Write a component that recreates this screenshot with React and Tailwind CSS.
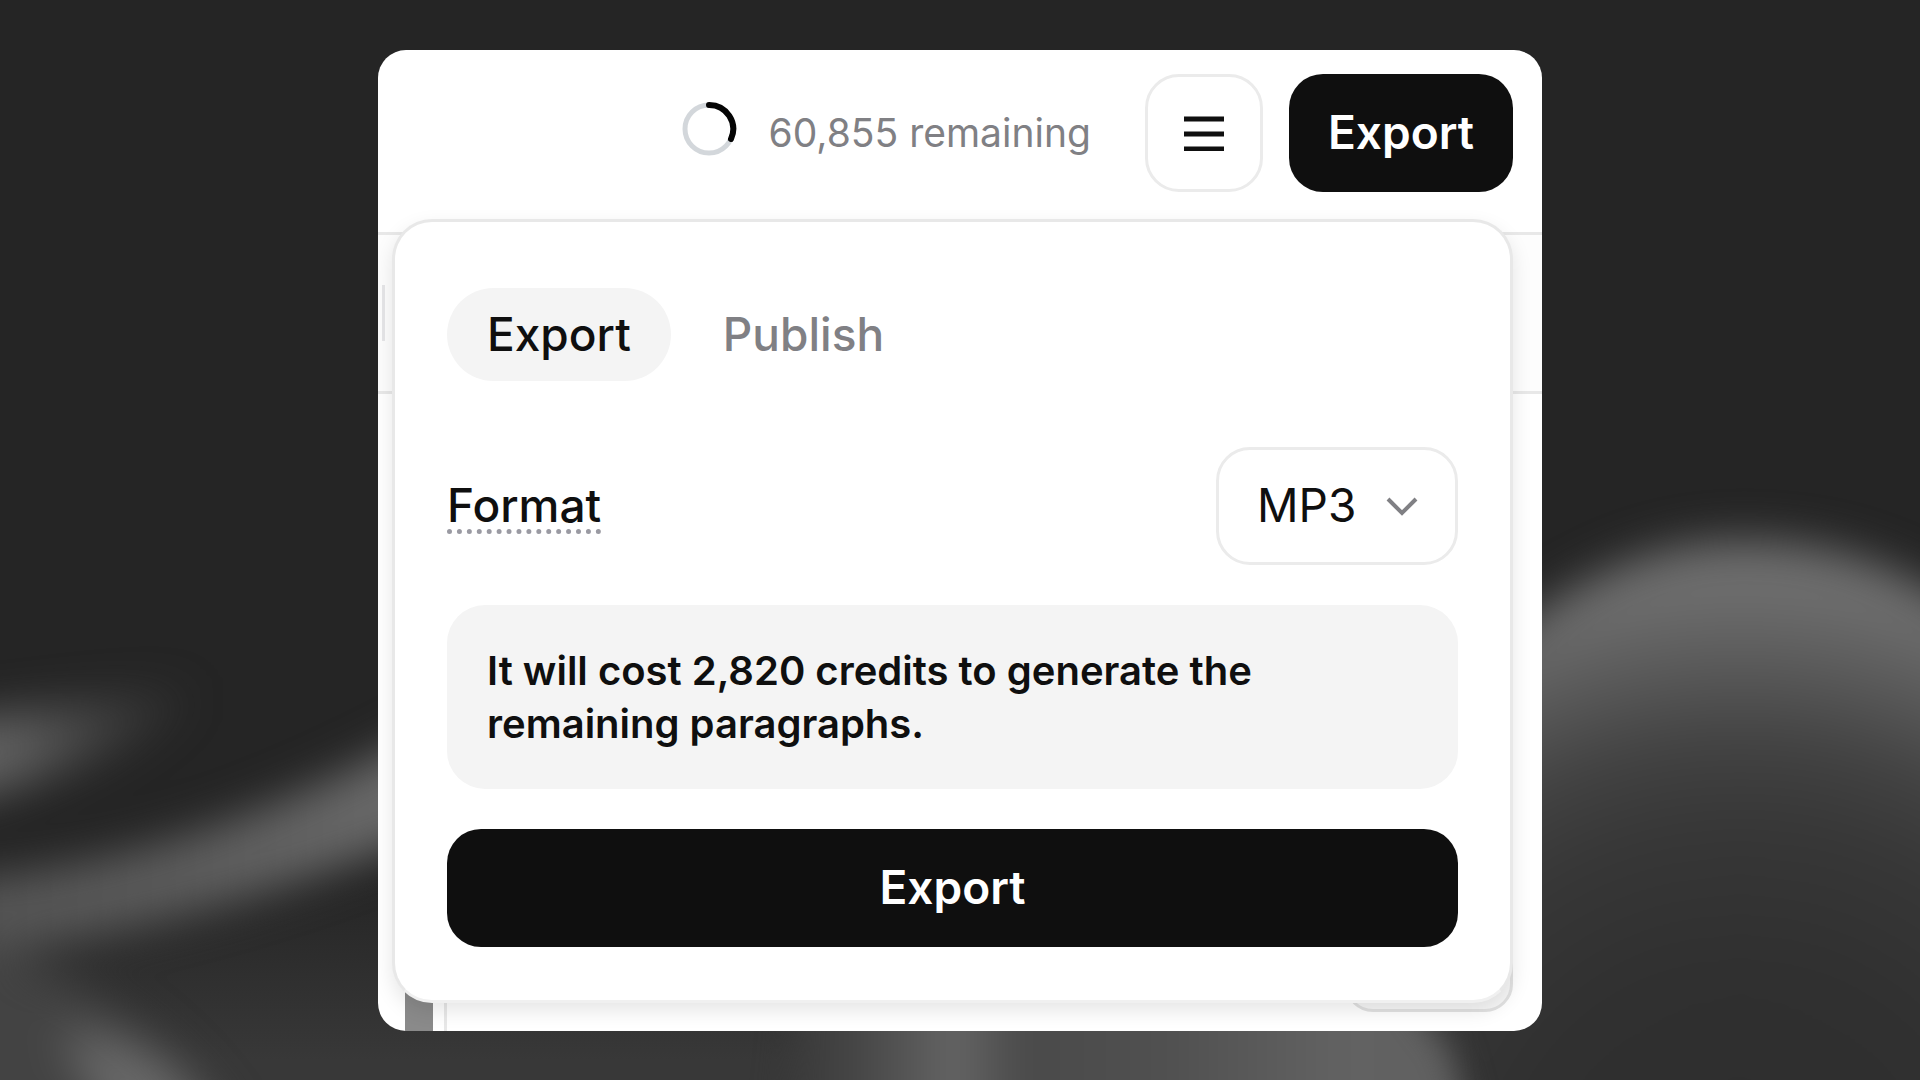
import React from "react";

function Backdrop() {
  return (
    <svg
      aria-hidden="true"
      className="absolute inset-0 h-full w-full"
      viewBox="0 0 1920 1080"
      preserveAspectRatio="none"
    >
      <defs>
        <radialGradient id="dome" gradientUnits="userSpaceOnUse" cx="1740" cy="1200" r="680">
          <stop offset="0" stopColor="#2d2d2d" />
          <stop offset="0.35" stopColor="#303030" />
          <stop offset="0.55" stopColor="#373737" />
          <stop offset="0.67" stopColor="#424242" />
          <stop offset="0.76" stopColor="#545454" />
          <stop offset="0.83" stopColor="#626262" />
          <stop offset="0.9" stopColor="#6e6e6e" />
          <stop offset="1" stopColor="#6c6c6c" />
        </radialGradient>
        <linearGradient id="ribbon" x1="0" y1="0" x2="1" y2="0">
          <stop offset="0" stopColor="#525252" />
          <stop offset="0.5" stopColor="#5c5c5c" />
          <stop offset="1" stopColor="#6c6c6c" />
        </linearGradient>
        <linearGradient id="wisp" gradientUnits="userSpaceOnUse" x1="0" y1="0" x2="200" y2="0">
          <stop offset="0" stopColor="#606060" />
          <stop offset="0.5" stopColor="#606060" stopOpacity="0.45" />
          <stop offset="1" stopColor="#606060" stopOpacity="0" />
        </linearGradient>
        <linearGradient id="floor" gradientUnits="userSpaceOnUse" x1="0" y1="880" x2="0" y2="1060">
          <stop offset="0" stopColor="#383838" stopOpacity="0" />
          <stop offset="1" stopColor="#383838" />
        </linearGradient>
        <linearGradient id="folds" gradientUnits="userSpaceOnUse" x1="780" y1="0" x2="1480" y2="0">
          <stop offset="0" stopColor="#383838" />
          <stop offset="0.1" stopColor="#444444" />
          <stop offset="0.25" stopColor="#646464" />
          <stop offset="0.35" stopColor="#4a4a4a" />
          <stop offset="0.55" stopColor="#505050" />
          <stop offset="0.8" stopColor="#626262" />
          <stop offset="1" stopColor="#606060" />
        </linearGradient>
        <filter id="soft" filterUnits="userSpaceOnUse" x="-100" y="400" width="2120" height="780" colorInterpolationFilters="sRGB">
          <feGaussianBlur stdDeviation="22" />
        </filter>
        <filter id="fold-soft" filterUnits="userSpaceOnUse" x="700" y="900" width="900" height="280" colorInterpolationFilters="sRGB">
          <feGaussianBlur stdDeviation="16" />
        </filter>
      </defs>
      <rect width="1920" height="1080" fill="#252525" />
      <rect y="880" width="1480" height="200" fill="url(#floor)" />
      <g filter="url(#soft)">
        <path d="M-60 722 C40 708 140 690 220 685 C160 735 60 785 -60 805 Z" fill="url(#wisp)" />
        <path d="M-60 880 C120 868 260 820 440 725 L440 828 C280 895 120 940 -60 960 Z" fill="url(#ribbon)" />
        <path d="M-80 920 C0 950 140 990 230 1130 L-80 1130 Z" fill="#434343" />
        <path d="M60 1030 C120 1030 190 1060 215 1130 L110 1130 Z" fill="#686868" />
        <path d="M1440 1160 L1420 720 C1500 630 1610 540 1740 540 C1850 540 1920 575 2020 650 L2020 1160 Z" fill="url(#dome)" />
      </g>
      <path d="M780 1160 L800 960 L1380 960 L1450 1050 L1480 1160 Z" fill="url(#folds)" filter="url(#fold-soft)" />
    </svg>
  );
}

function CreditsRing() {
  return (
    <svg aria-hidden="true" className="mb-2 size-14" viewBox="0 0 56 56" fill="none">
      <circle cx="28" cy="28" r="24" stroke="#d3d7db" strokeWidth="5" />
      <path d="M28 4 A24 24 0 0 1 50 38" stroke="#050505" strokeWidth="6" strokeLinecap="round" />
    </svg>
  );
}

function EditorBehind() {
  return (
    <div aria-hidden="true" className="absolute inset-0 flex flex-col">
      <div className="h-[185px] border-b-[3px] border-[#e8e8e8]" />
      <div className="flex h-[159px] items-center border-b-[3px] border-[#e8e8e8] bg-[#fdfdfd] pl-1">
        <div className="h-14 w-[3px] bg-[#e6e6e8]" />
      </div>
      <div className="flex flex-1 justify-between pr-[29px] pl-[27px]">
        <div className="flex gap-2">
          <div className="w-7 bg-[#8a8a8a]" />
          <div className="w-[6px] border-r-[3px] border-[#e8e8e8]" />
        </div>
        <div className="mb-[19px] w-[168px] self-end rounded-[28px] border-[3px] border-[#e2e2e2] bg-[#f7f7f7] pt-20" />
      </div>
    </div>
  );
}

export default function App() {
  return (
    <main className="relative flex min-h-screen items-center justify-center overflow-hidden bg-[#252525] p-6 font-['Inter',sans-serif] text-[#0f0f0f]">
      <Backdrop />
      <section className="relative w-full max-w-[1164px] overflow-hidden rounded-[28px] bg-white pb-7">
        <EditorBehind />
        <header className="relative flex items-center justify-end pt-6 pr-[29px] pb-[27px]">
          <CreditsRing />
          <p className="ml-8 text-[39px] leading-none text-[#808084]">60,855 remaining</p>
          <button
            type="button"
            aria-label="Menu"
            className="ml-[54px] flex size-[118px] items-center justify-center rounded-[34px] border-[3px] border-[#ebebeb] bg-white"
          >
            <svg aria-hidden="true" className="h-9 w-10" viewBox="0 0 40 36" stroke="#0f0f0f" strokeWidth="5">
              <path d="M0 4H40M0 19H40M0 34H40" />
            </svg>
          </button>
          <button
            type="button"
            className="ml-[26px] h-[118px] rounded-[34px] bg-[#0f0f0f] px-[39px] text-[46px] font-semibold text-white"
          >
            Export
          </button>
        </header>

        <div className="relative mr-[29px] ml-[14px] rounded-[40px] border-[3px] border-[#e8e8e8] border-b-[#f0f0f0] bg-white px-[52px] pt-[66px] pb-[53px] shadow-[0_8px_20px_rgba(0,0,0,0.1)]">
          <div role="tablist" className="flex gap-3">
            <button role="tab" aria-selected="true" type="button" className="h-[93px] rounded-full bg-[#f4f4f4] px-10 text-[46px] font-medium">
              Export
            </button>
            <button role="tab" aria-selected="false" type="button" className="h-[93px] rounded-full px-10 text-[46px] font-medium text-[#808084]">
              Publish
            </button>
          </div>

          <div className="mt-[66px] flex items-center justify-between">
            <label htmlFor="format" className="border-b-[5px] border-dotted border-[#9a9aa2] pt-1 text-[46px] leading-[48px] font-medium">
              Format
            </label>
            <div className="relative">
              <select
                id="format"
                defaultValue="MP3"
                className="block h-[118px] w-[242px] appearance-none rounded-[34px] border-[3px] border-[#ebebeb] bg-white pr-20 pl-[38px] text-[46px]"
              >
                <option>MP3</option>
                <option>WAV</option>
              </select>
              <svg
                aria-hidden="true"
                className="pointer-events-none absolute inset-y-0 right-10 my-auto h-5 w-8"
                viewBox="0 0 32 20"
                fill="none"
                stroke="#808084"
                strokeWidth="4"
              >
                <path d="M2 3L16 17L30 3" />
              </svg>
            </div>
          </div>

          <p className="mt-10 rounded-[38px] bg-[#f4f4f4] px-10 py-[39px] text-[40px] leading-[53px] font-semibold">
            It will cost 2,820 credits to generate the remaining paragraphs.
          </p>

          <button type="button" className="mt-10 h-[118px] w-full rounded-[34px] bg-[#0f0f0f] text-[46px] font-semibold text-white">
            Export
          </button>
        </div>
      </section>
    </main>
  );
}
